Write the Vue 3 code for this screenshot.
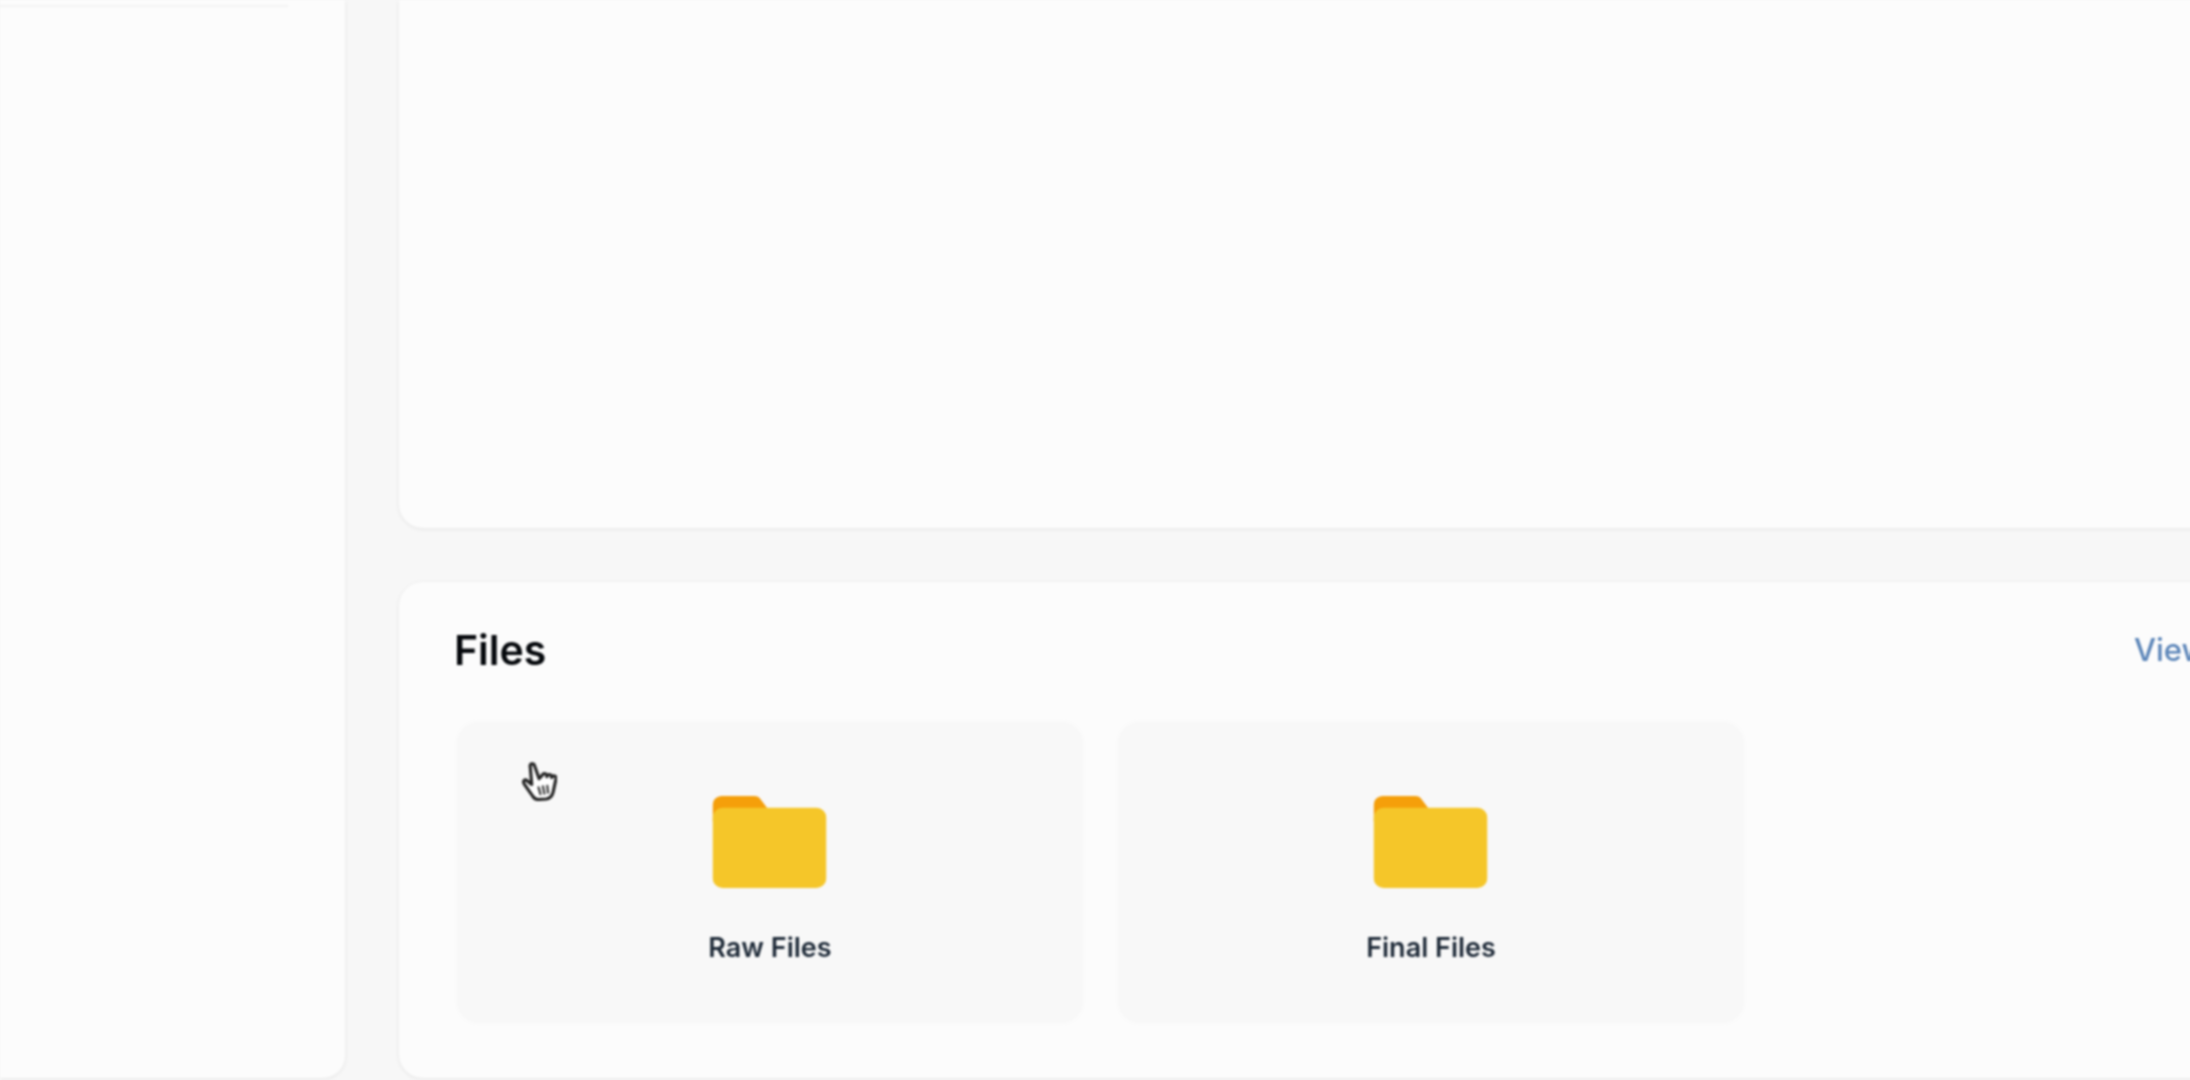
<script setup>
const folders = ['Raw Files', 'Final Files']
</script>

<template>
  <div class="page">
    <aside class="sidebar">
      <div class="sidebar-rule"></div>
    </aside>
    <main class="main">
      <section class="card preview"></section>
      <section class="card files">
        <header class="files-head">
          <h2 class="files-title">Files</h2>
          <a class="view-all">View All</a>
        </header>
        <div class="grid">
          <div v-for="name in folders" :key="name" class="tile">
            <svg class="folder" viewBox="0 0 115 93" aria-hidden="true">
              <path d="M0 26V9a9 9 0 0 1 9-9h33c3 0 5 1 7 4l9 12H20L0 26z" fill="#f59f0a" />
              <rect x="0" y="12" width="115" height="81" rx="10" fill="#f5c629" />
            </svg>
            <span class="tile-label">{{ name }}</span>
          </div>
          <div class="tile tile-empty"></div>
        </div>
      </section>
    </main>
    <svg class="cursor" viewBox="0 0 36 40" aria-hidden="true">
      <path
        d="M10 23 L5 19 C2.5 17 0.5 20 2.5 23 L11 35 C12.5 37.5 14 38.5 17 38.5 L25 38 C29 37.5 31 35 32 31 L35 17 C35.5 14 31.5 13 30.5 16 C31 13 27 11.5 25.5 15 C26 12 22 10.5 20.5 14 L17.5 17 L13 4 C12 0.5 7.5 1.5 8.5 5 Z"
        fill="#ffffff"
        stroke="#222222"
        stroke-width="3.2"
        stroke-linejoin="round"
      />
      <path d="M17 26 L19 33 M21.5 25 L23 32.5 M26 24.5 L26.8 31.5" stroke="#333333" stroke-width="2.2" fill="none" stroke-linecap="round" />
    </svg>
  </div>
</template>

<style>
html, body {
  margin: 0;
  height: 100%;
  overflow: hidden;
  background: #f7f7f7;
}
</style>

<style scoped>
.page {
  position: relative;
  display: flex;
  align-items: flex-start;
  gap: 54px;
  width: 2460px;
  height: 1080px;
  overflow: hidden;
  background: #f7f7f7;
  font-family: Inter, "Liberation Sans", sans-serif;
  filter: blur(0.8px);
}
.sidebar {
  flex: none;
  width: 345px;
  height: 1078px;
  box-sizing: border-box;
  padding-top: 5px;
  background: #fcfcfc;
  border-radius: 0 0 22px 0;
  box-shadow: 0 1px 4px rgba(0, 0, 0, 0.08);
}
.sidebar-rule {
  width: 288px;
  height: 2px;
  background: #f3f3f3;
}
.main {
  flex: 1;
  min-width: 0;
  display: flex;
  flex-direction: column;
  gap: 54px;
}
.card {
  background: #fcfcfc;
  box-shadow: 0 1px 4px rgba(0, 0, 0, 0.08);
}
.preview {
  height: 528px;
  border-radius: 0 0 24px 24px;
}
.files {
  height: 496px;
  box-sizing: border-box;
  padding: 54px;
  border-radius: 24px;
}
.files-head {
  display: flex;
  align-items: center;
  justify-content: space-between;
  height: 28px;
  margin-bottom: 58px;
}
.files-title {
  margin: 0 0 0 1px;
  font-size: 41px;
  line-height: 28px;
  font-weight: 600;
  color: #05080c;
}
.view-all {
  margin-right: 153px;
  font-size: 31px;
  line-height: 28px;
  font-weight: 500;
  color: #5a84b8;
}
.grid {
  display: grid;
  grid-template-columns: repeat(3, 626px);
  gap: 35px;
  margin-left: 4px;
}
.tile {
  height: 301px;
  box-sizing: border-box;
  padding-top: 74px;
  display: flex;
  flex-direction: column;
  align-items: center;
  background: #f8f8f8;
  border-radius: 22px;
  box-shadow: 0 0 6px #f9f9f9;
}
.tile-empty {
  background: transparent;
  box-shadow: none;
}
.folder {
  width: 114px;
  height: 92px;
  transform: translateX(-0.5px);
}
.tile-label {
  margin-top: 45px;
  font-size: 27px;
  line-height: 30px;
  font-weight: 600;
  color: #1e2a38;
}
.cursor {
  position: absolute;
  left: 522px;
  top: 762px;
  width: 35px;
  height: 39px;
}
</style>
